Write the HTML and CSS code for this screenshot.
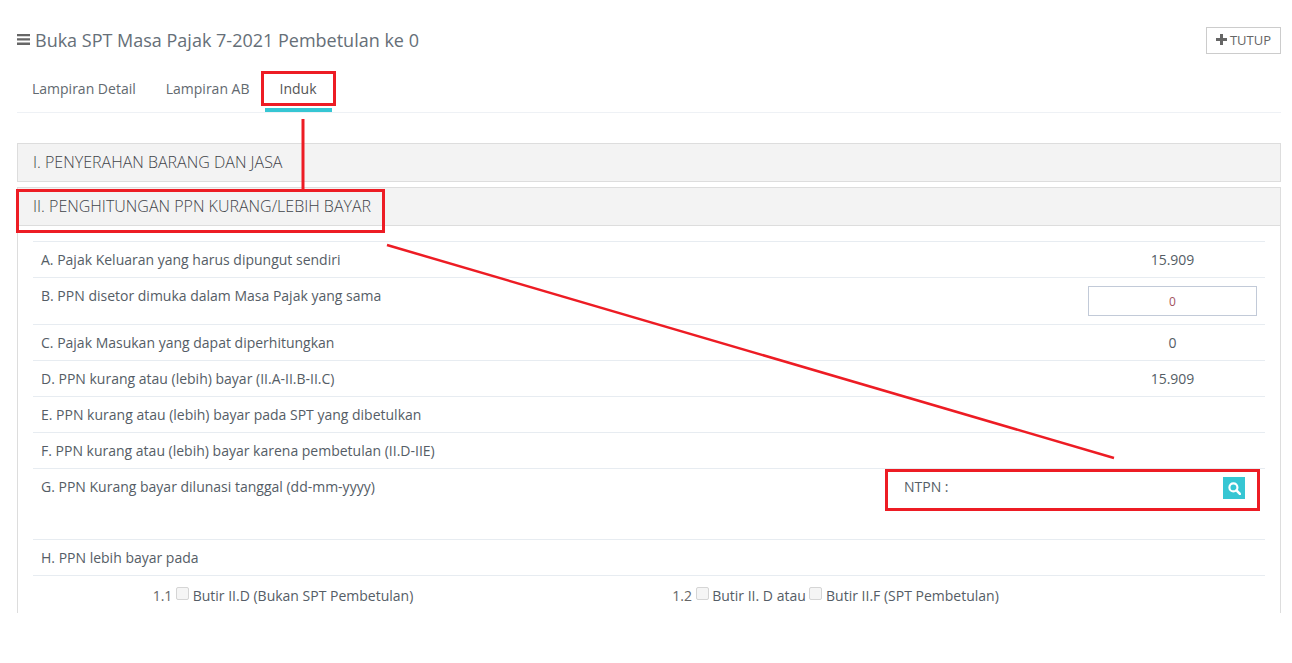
FILE: index.html
```html
<!DOCTYPE html>
<html lang="id">
<head>
<meta charset="utf-8">
<title>Buka SPT Masa Pajak</title>
<link rel="stylesheet" href="styles.css">
</head>
<body>
<main class="page">
  <header class="title-bar">
    <h1 class="title">
      <svg class="bars" viewBox="0 0 13 11" width="13" height="11" aria-hidden="true"><path d="M0 0h13v2.3H0zM0 4.3h13v2.3H0zM0 8.6h13v2.3H0z"/></svg>
      <span>Buka SPT Masa Pajak 7-2021 Pembetulan ke 0</span>
    </h1>
    <button class="close-btn" type="button">
      <svg viewBox="0 0 11 11" width="11" height="11" aria-hidden="true"><path d="M4 0h3v4h4v3H7v4H4V7H0V4h4z"/></svg>
      <span>TUTUP</span>
    </button>
  </header>

  <nav class="tabs">
    <a class="tab">Lampiran Detail</a>
    <a class="tab">Lampiran AB</a>
    <a class="tab active">Induk</a>
  </nav>

  <section class="panel first">
    <h2 class="panel-heading">I. PENYERAHAN BARANG DAN JASA</h2>
  </section>

  <section class="panel">
    <h2 class="panel-heading">II. PENGHITUNGAN PPN KURANG/LEBIH BAYAR</h2>
    <div class="panel-body">
      <div class="row">
        <div class="label">A. Pajak Keluaran yang harus dipungut sendiri</div>
        <div class="value">15.909</div>
      </div>
      <div class="row row-input">
        <div class="label">B. PPN disetor dimuka dalam Masa Pajak yang sama</div>
        <div class="value"><input class="amount" type="text" value="0"></div>
      </div>
      <div class="row">
        <div class="label">C. Pajak Masukan yang dapat diperhitungkan</div>
        <div class="value">0</div>
      </div>
      <div class="row">
        <div class="label">D. PPN kurang atau (lebih) bayar (II.A-II.B-II.C)</div>
        <div class="value">15.909</div>
      </div>
      <div class="row">
        <div class="label">E. PPN kurang atau (lebih) bayar pada SPT yang dibetulkan</div>
      </div>
      <div class="row">
        <div class="label">F. PPN kurang atau (lebih) bayar karena pembetulan (II.D-IIE)</div>
      </div>
      <div class="row row-ntpn">
        <div class="label">G. PPN Kurang bayar dilunasi tanggal (dd-mm-yyyy)</div>
        <div class="ntpn">
          <span>NTPN :</span>
          <button class="search-btn" type="button" aria-label="Cari">
            <svg viewBox="0 0 12 12" width="13" height="13" aria-hidden="true"><circle cx="5" cy="5" r="3.7" fill="none" stroke="#fff" stroke-width="2"/><path d="M7.8 7.8 11 11" stroke="#fff" stroke-width="2.4" stroke-linecap="round"/></svg>
          </button>
        </div>
      </div>
      <div class="row">
        <div class="label">H. PPN lebih bayar pada</div>
      </div>
      <div class="row row-checks">
        <div class="check-group"><span class="num">1.1</span> <input class="check" type="checkbox" disabled> Butir II.D (Bukan SPT Pembetulan)</div>
        <div class="check-group"><span class="num">1.2</span> <input class="check" type="checkbox" disabled> Butir II. D atau <input class="check" type="checkbox" disabled> Butir II.F (SPT Pembetulan)</div>
      </div>
    </div>
  </section>
</main>

<svg class="annotations" width="1292" height="663" viewBox="0 0 1292 663" aria-hidden="true">
  <rect x="262.5" y="72.5" width="72" height="32"/>
  <rect x="17.5" y="190.5" width="366" height="41"/>
  <rect x="886.5" y="470.5" width="372" height="39"/>
  <path d="M303 119V189"/>
  <path class="thin" d="M387 245 1114 458"/>
</svg>
</body>
</html>
```

FILE: styles.css
```css
* { box-sizing: border-box; }
html, body { margin: 0; background: #fff; }
body {
  width: 1292px;
  height: 663px;
  overflow: hidden;
  position: relative;
  font-family: "Open Sans", "Liberation Sans", sans-serif;
  font-size: 14px;
  color: #555d66;
}
.page {
  height: 613px;
  overflow: hidden;
  padding: 27px 11px 0 17px;
}
.title-bar {
  display: flex;
  justify-content: space-between;
  align-items: flex-start;
  height: 27px;
}
.title {
  margin: 0;
  display: flex;
  align-items: center;
  gap: 5px;
  height: 25px;
  font-size: 18px;
  font-weight: 400;
  color: #666f78;
}
.bars { fill: #666; }
.close-btn {
  display: flex;
  align-items: center;
  justify-content: center;
  gap: 3px;
  width: 75px;
  height: 27px;
  padding: 0 0 2px;
  border: 1px solid #ccc;
  background: #fff;
  font: 400 13px "Open Sans", sans-serif;
  color: #666;
}
.close-btn svg { fill: #666; }
.tabs {
  display: flex;
  margin-top: 18px;
  height: 41px;
  border-bottom: 1px solid #eef1f5;
}
.tab {
  display: flex;
  align-items: center;
  padding: 0 15px 8px;
  height: 40px;
  color: #62696f;
}
.tab.active {
  border-bottom: 4px solid #36c6d3;
  padding-bottom: 4px;
  color: #555;
}
.panel {
  border: 1px solid #ddd;
  margin-top: 5px;
}
.panel.first { margin-top: 30px; }
.panel-heading {
  margin: 0;
  height: 37px;
  padding: 0 15px 2px;
  display: flex;
  align-items: center;
  background: #f3f3f3;
  font-size: 16px;
  font-weight: 300;
  color: #3f444a;
}
.panel-body {
  border-top: 1px solid #ddd;
  padding: 15px 15px 0;
}
.row {
  display: flex;
  justify-content: space-between;
  height: 36px;
  border-top: 1px solid #e7ecf1;
  padding: 8px 8px 0;
  line-height: 20px;
}
.row-input { height: 47px; }
.row-ntpn { height: 71px; padding-right: 20px; }
.row-checks {
  display: grid;
  grid-template-columns: 500px 605px;
  justify-content: start;
  padding: 10px 0 0;
  height: 60px;
}
.label { white-space: nowrap; }
.value {
  width: 169px;
  text-align: center;
}
.amount {
  display: block;
  width: 169px;
  height: 30px;
  margin-top: 0;
  border: 1px solid #c2cad8;
  background: #fff;
  text-align: center;
  font: 400 12px "Open Sans", sans-serif;
  color: #a3525f;
}
.ntpn {
  width: 341px;
  display: flex;
  justify-content: space-between;
  align-items: flex-start;
}
.search-btn {
  display: flex;
  align-items: center;
  justify-content: center;
  width: 22px;
  height: 22px;
  padding: 0;
  border: 0;
  background: #36c6d3;
}
.check-group { text-align: center; white-space: nowrap; }
.num { color: #666; }
.check {
  appearance: none;
  display: inline-block;
  width: 13px;
  height: 13px;
  margin: 0;
  vertical-align: 1px;
  border: 1px solid #d5d5d5;
  border-radius: 2px;
  background: #f5f5f5;
}
.annotations {
  position: absolute;
  left: 0;
  top: 0;
  pointer-events: none;
  fill: none;
  stroke: #ed1c24;
  stroke-width: 3;
}
.annotations .thin { stroke-width: 2.5; }
```
